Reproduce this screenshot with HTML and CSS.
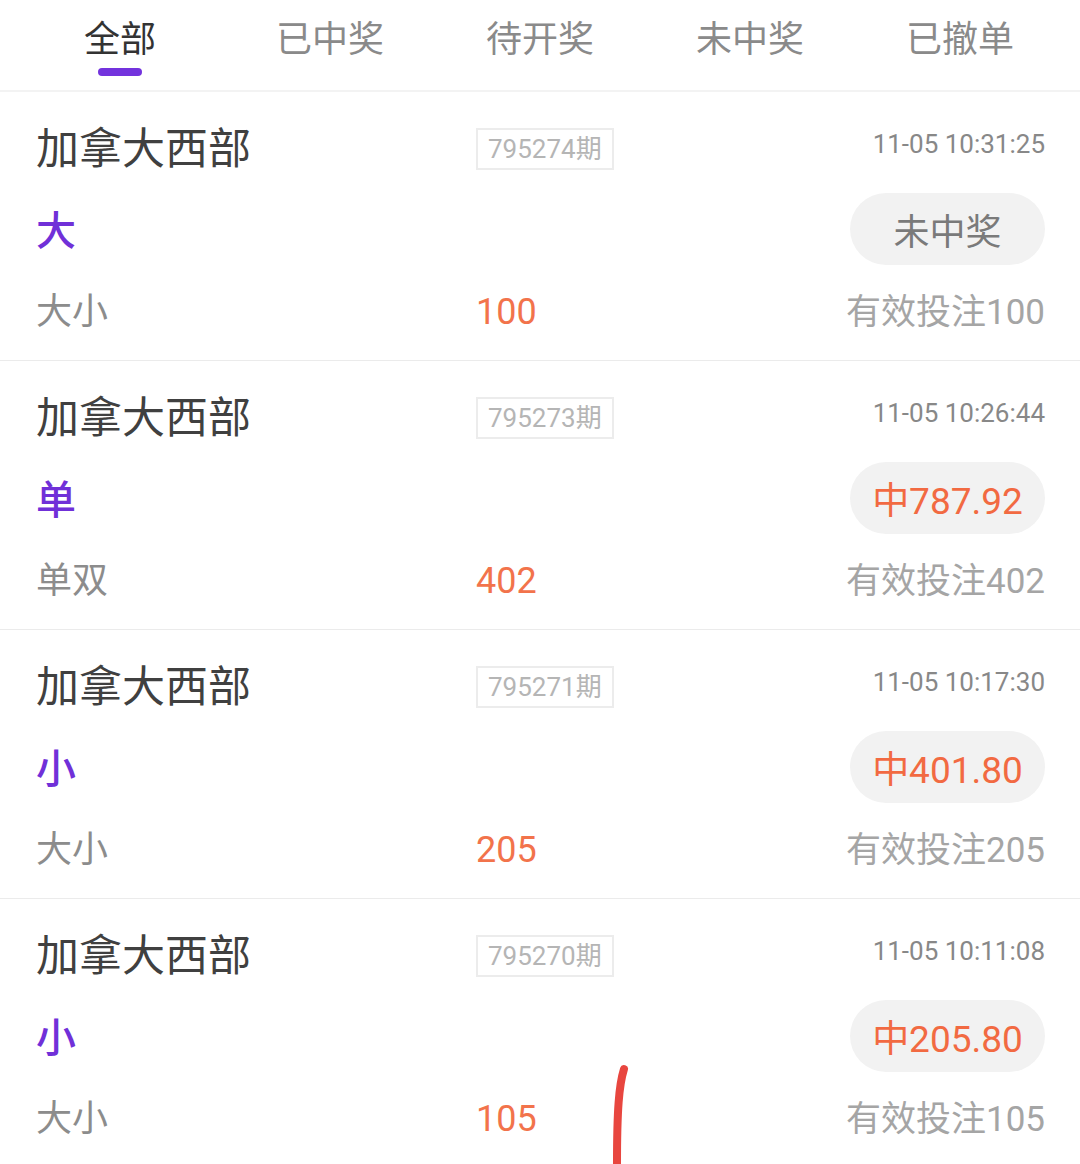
FILE: index.html
```html
<!DOCTYPE html>
<html lang="zh-CN">

<head>
    <meta charset="UTF-8">
    <title>投注记录</title>
    <link rel="stylesheet" href="styles.css">
</head>

<body>

    <div class="tabs">
        <div class="tab active">全部</div>
        <div class="tab">已中奖</div>
        <div class="tab">待开奖</div>
        <div class="tab">未中奖</div>
        <div class="tab">已撤单</div>
    </div>

    <div class="list">
        <div class="bet">
            <div class="bet-name">加拿大西部</div>
            <div class="bet-issue"><span>795274期</span></div>
            <div class="bet-time">11-05 10:31:25</div>

            <div class="bet-pick">大</div>
            <div class="bet-status"><span class="pill lose">未中奖</span></div>

            <div class="bet-play">大小</div>
            <div class="bet-amount">100</div>
            <div class="bet-valid">有效投注100</div>
        </div>

        <div class="bet">
            <div class="bet-name">加拿大西部</div>
            <div class="bet-issue"><span>795273期</span></div>
            <div class="bet-time">11-05 10:26:44</div>

            <div class="bet-pick">单</div>
            <div class="bet-status"><span class="pill win">中787.92</span></div>

            <div class="bet-play">单双</div>
            <div class="bet-amount">402</div>
            <div class="bet-valid">有效投注402</div>
        </div>

        <div class="bet">
            <div class="bet-name">加拿大西部</div>
            <div class="bet-issue"><span>795271期</span></div>
            <div class="bet-time">11-05 10:17:30</div>

            <div class="bet-pick">小</div>
            <div class="bet-status"><span class="pill win">中401.80</span></div>

            <div class="bet-play">大小</div>
            <div class="bet-amount">205</div>
            <div class="bet-valid">有效投注205</div>
        </div>

        <div class="bet">
            <div class="bet-name">加拿大西部</div>
            <div class="bet-issue"><span>795270期</span></div>
            <div class="bet-time">11-05 10:11:08</div>

            <div class="bet-pick">小</div>
            <div class="bet-status"><span class="pill win">中205.80</span></div>

            <div class="bet-play">大小</div>
            <div class="bet-amount">105</div>
            <div class="bet-valid">有效投注105</div>
        </div>
    </div>

    <!-- hand-drawn mark over the screenshot -->
    <svg class="scribble" width="1080" height="1164" viewBox="0 0 1080 1164">
        <path d="M624 1069 C619 1085 617 1110 617 1164" fill="none" stroke="#e8463f" stroke-width="8" stroke-linecap="round" />
    </svg>

</body>

</html>
```

FILE: styles.css
```css
html,
body {
    margin: 0;
    padding: 0;
    background: white;
    font-family: Roboto, "Noto Sans CJK SC", sans-serif;
    height: 100%;
    overflow: hidden;
}

.tabs {
    display: grid;
    grid-template-columns: repeat(5, 1fr);
    padding: 0 15px;
    height: 90px;
    border-bottom: 2px solid #f3f3f3;
}

.tab {
    position: relative;
    display: flex;
    justify-content: center;
    padding-top: 20px;
    font-size: 36px;
    line-height: 40px;
    color: #8a8a8a;
}

.tab.active {
    color: #333;
}

.tab.active::after {
    content: "";
    position: absolute;
    top: 68px;
    left: 50%;
    width: 44px;
    height: 8px;
    margin-left: -22px;
    border-radius: 4px;
    background: #7333dd;
}

.bet {
    display: grid;
    grid-template-columns: 440px 1fr auto;
    grid-template-rows: 66px 100px 60px;
    align-items: center;
    padding: 24px 35px 18px 36px;
    border-bottom: 1px solid #ebebeb;
}

.bet-name {
    font-size: 43px;
    color: #404040;
    line-height: 1;
}

.bet-issue span {
    display: inline-block;
    border: 2px solid #ececec;
    padding: 0 10px;
    height: 38px;
    line-height: 38px;
    font-size: 26px;
    color: #b5b5b5;
}

.bet-time {
    justify-self: end;
    font-size: 26px;
    color: #888;
    line-height: 1;
    margin-top: -10px;
}

.bet-pick {
    grid-column: 1 / 3;
    font-size: 40px;
    font-weight: 500;
    color: #7030d8;
    line-height: 1;
}

.bet-status {
    display: flex;
    justify-content: flex-end;
    margin-top: -6px;
}

.pill {
    display: flex;
    align-items: center;
    justify-content: center;
    width: 195px;
    height: 72px;
    border-radius: 36px;
    background: #f2f2f2;
    font-size: 36px;
}

.pill.lose {
    color: #7a7a7a;
}

.pill.win {
    color: #f26a42;
    font-size: 37px;
}

.bet-play {
    font-size: 36px;
    color: #8c8c8c;
    line-height: 1;
}

.bet-amount {
    font-size: 36px;
    color: #f2734b;
    line-height: 1;
}

.bet-valid {
    justify-self: end;
    font-size: 35px;
    color: #a5a5a5;
    line-height: 1;
}

.scribble {
    position: absolute;
    top: 0;
    left: 0;
    pointer-events: none;
}
```
